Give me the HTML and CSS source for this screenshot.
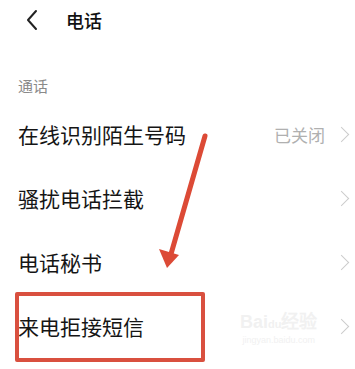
FILE: index.html
```html
<!DOCTYPE html>
<html lang="zh-CN">
<head>
    <meta charset="UTF-8">
    <meta name="viewport" content="width=device-width, initial-scale=1.0">
    <title>电话</title>
    <link rel="stylesheet" href="styles.css">
</head>
<body>

    <div class="page">
        <div class="header">
            <svg class="back" width="14" height="22" viewBox="0 0 14 22">
                <path d="M11 2 L3 11 L11 20" fill="none" stroke="#222" stroke-width="2" stroke-linecap="round" stroke-linejoin="round"/>
            </svg>
            <h1>电话</h1>
        </div>

        <div class="section-title">通话</div>

        <div class="list">
            <div class="row">
                <span class="label">在线识别陌生号码</span>
                <span class="value">已关闭</span>
                <span class="chevron"></span>
            </div>
            <div class="row">
                <span class="label">骚扰电话拦截</span>
                <span class="chevron"></span>
            </div>
            <div class="row">
                <span class="label">电话秘书</span>
                <span class="chevron"></span>
            </div>
            <div class="row">
                <span class="label">来电拒接短信</span>
                <span class="chevron"></span>
            </div>
        </div>

        <!-- annotation drawn over the screenshot -->
        <div class="mark-box"></div>
        <svg class="mark-arrow" width="355" height="369" viewBox="0 0 355 369">
            <line x1="205" y1="136" x2="171" y2="254" stroke="#dc4a36" stroke-width="5" stroke-linecap="round"/>
            <polygon points="159,249 179,255 167,268" fill="#dc4a36"/>
        </svg>

        <div class="watermark">
            <div class="wm-logo">Bai<span class="wm-du">du</span>经验</div>
            <div class="wm-url">jingyan.baidu.com</div>
        </div>
    </div>

</body>
</html>
```

FILE: styles.css
```css
* {
    margin: 0;
    padding: 0;
    box-sizing: border-box;
}

body {
    background: #fff;
    font-family: "Noto Sans CJK SC", "Noto Sans", sans-serif;
    color: #111;
}

.page {
    position: relative;
    width: 355px;
    height: 369px;
    overflow: hidden;
}

.header {
    display: flex;
    align-items: center;
    height: 40px;
    padding-left: 25px;
}

.back {
    display: block;
}

.header h1 {
    font-size: 18px;
    font-weight: 500;
    margin-left: 27px;
    color: #111;
}

.section-title {
    font-size: 15px;
    color: #8a8a8a;
    padding-left: 18px;
    margin-top: 36px;
    height: 26px;
    line-height: 20px;
}

.row {
    display: flex;
    align-items: center;
    height: 64px;
    padding-left: 18px;
    padding-right: 4px;
}

.label {
    font-size: 21px;
    flex: 1;
    color: #151515;
}

.value {
    font-size: 17px;
    color: #b0b0b0;
    margin-right: 11px;
}

.chevron {
    width: 11px;
    height: 11px;
    border-top: 1.5px solid #cccccc;
    border-right: 1.5px solid #cccccc;
    transform: rotate(45deg);
    margin-right: 4px;
}

.mark-box {
    position: absolute;
    left: 15px;
    top: 292px;
    width: 190px;
    height: 70px;
    border: 4px solid #d9503f;
    border-radius: 2px;
}

.mark-arrow {
    position: absolute;
    left: 0;
    top: 0;
}

.watermark {
    position: absolute;
    left: 240px;
    top: 312px;
    color: #f1f1f1;
    text-align: center;
}

.wm-logo {
    font-family: "Liberation Sans", sans-serif;
    font-size: 18px;
    font-weight: bold;
    line-height: 20px;
}

.wm-du {
    font-size: 11px;
}

.wm-url {
    font-family: "Liberation Sans", sans-serif;
    font-size: 9px;
    line-height: 12px;
}
```
